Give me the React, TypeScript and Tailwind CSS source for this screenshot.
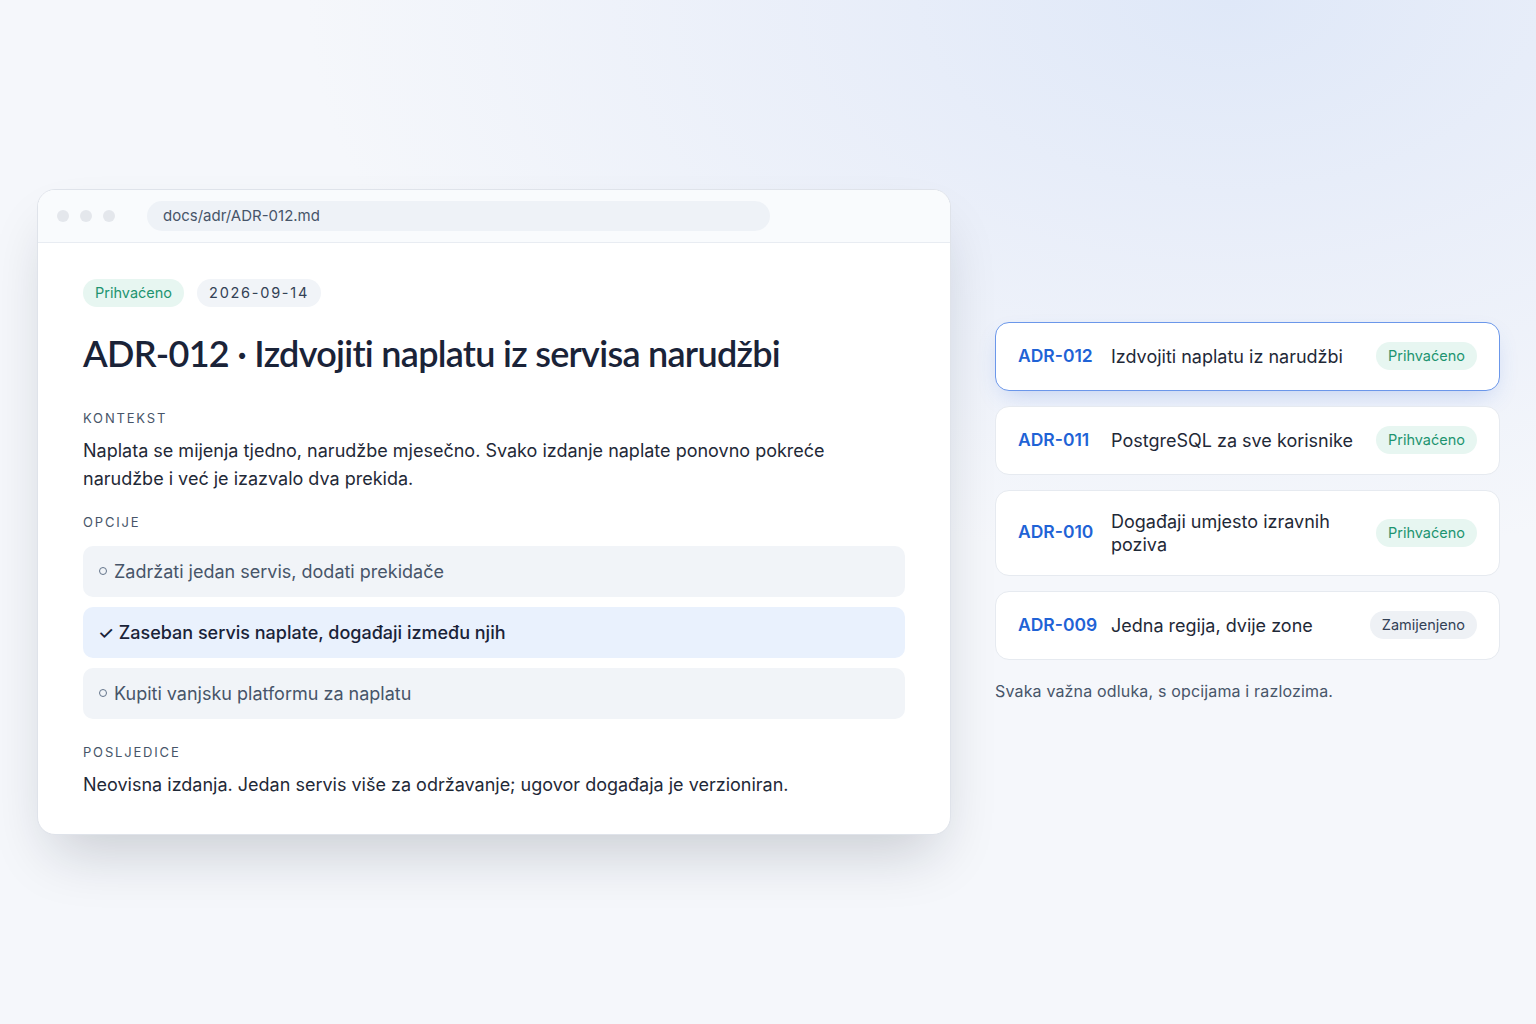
import React from "react";

const adrs = [
  { id: "ADR-012", title: "Izdvojiti naplatu iz narudžbi", status: "Prihvaćeno", active: true },
  { id: "ADR-011", title: "PostgreSQL za sve korisnike", status: "Prihvaćeno" },
  { id: "ADR-010", title: "Događaji umjesto izravnih poziva", status: "Prihvaćeno" },
  { id: "ADR-009", title: "Jedna regija, dvije zone", status: "Zamijenjeno" },
];

function Circle() {
  return <span className="mr-[7px] inline-block h-[8px] w-[8px] shrink-0 rounded-full border-[1.3px] border-[#64748b]" />;
}

export default function App() {
  return (
    <div
      className="relative h-screen w-full overflow-hidden bg-[#f5f7fb] text-[#1f2937]"
      style={{ fontFamily: "Inter, 'Noto Sans', sans-serif" }}
    >
      <div className="pointer-events-none absolute inset-0 bg-[radial-gradient(ellipse_60%_55%_at_80%_0%,#dfe8f8_0%,rgba(226,233,248,0.6)_45%,rgba(245,247,251,0)_100%)]" />
      <div className="relative flex h-full items-center gap-[44px] pl-[37px] pr-[36px]">
        {/* Window */}
        <div className="w-[914px] shrink-0 overflow-hidden rounded-[18px] border border-[#dfe3ea] bg-white shadow-[0_30px_60px_-15px_rgba(15,23,42,0.2)]">
          <div className="flex h-[53px] items-center gap-[32px] border-b border-[#e8ecf2] bg-[#f9fbfd] pl-[19px] pr-[180px]">
            <div className="flex gap-[11px]">
              <span className="h-[12px] w-[12px] rounded-full bg-[#e4e7ec]" />
              <span className="h-[12px] w-[12px] rounded-full bg-[#e4e7ec]" />
              <span className="h-[12px] w-[12px] rounded-full bg-[#e4e7ec]" />
            </div>
            <div className="flex h-[30px] flex-1 items-center rounded-full bg-[#eef2f7] px-[16px] text-[15px] text-[#475569]">
              docs/adr/ADR-012.md
            </div>
          </div>
          <div className="px-[45px] pt-[36px] pb-[35px]">
            <div className="flex gap-[13px]">
              <span className="flex h-[28px] items-center rounded-full bg-[#e7f6f1] px-[12px] text-[14.5px] text-[#1d9470]">
                Prihvaćeno
              </span>
              <span className="flex h-[28px] items-center rounded-full bg-[#f1f4f8] px-[12px] text-[14.5px] tracking-[0.12em] text-[#334155]">
                2026-09-14
              </span>
            </div>
            <h1
              className="mt-[24px] text-[36px] leading-[44px] tracking-[-0.02em] text-[#1a2338]"
              style={{ fontFamily: "Lato, Inter, sans-serif", fontWeight: 600 }}
            >
              ADR-012 · Izdvojiti naplatu iz servisa narudžbi
            </h1>
            <div className="mt-[34px] text-[13px] tracking-[0.14em] text-[#475569]">KONTEKST</div>
            <p className="mt-[9px] text-[18px] leading-[28px] text-[#1f2937]">
              Naplata se mijenja tjedno, narudžbe mjesečno. Svako izdanje naplate ponovno pokreće
              <br />
              narudžbe i već je izazvalo dva prekida.
            </p>
            <div className="mt-[20px] text-[13px] tracking-[0.14em] text-[#475569]">OPCIJE</div>
            <div className="mt-[13px] flex flex-col gap-[10px]">
              <div className="flex h-[51px] items-center rounded-[10px] bg-[#f1f4f8] px-[16px] text-[18px] text-[#475569]">
                <Circle />
                Zadržati jedan servis, dodati prekidače
              </div>
              <div className="flex h-[51px] items-center rounded-[10px] bg-[#e9f1fd] px-[15px] text-[18px] font-medium text-[#1a2338]">
                ✓ Zaseban servis naplate, događaji između njih
              </div>
              <div className="flex h-[51px] items-center rounded-[10px] bg-[#f1f4f8] px-[16px] text-[18px] text-[#475569]">
                <Circle />
                Kupiti vanjsku platformu za naplatu
              </div>
            </div>
            <div className="mt-[24px] text-[13px] tracking-[0.14em] text-[#475569]">POSLJEDICE</div>
            <p className="mt-[9px] text-[18px] leading-[28px] text-[#1f2937]">
              Neovisna izdanja. Jedan servis više za održavanje; ugovor događaja je verzioniran.
            </p>
          </div>
        </div>

        {/* Right list */}
        <div className="flex flex-1 flex-col">
          <div className="flex flex-col gap-[15px]">
            {adrs.map((a) => (
              <div
                key={a.id}
                className={
                  a.active
                    ? "flex min-h-[69px] items-center rounded-[14px] border border-[#6b97ea] bg-white px-[22px] py-[19px] shadow-[0_10px_24px_-8px_rgba(59,110,220,0.28)]"
                    : "flex min-h-[69px] items-center rounded-[14px] border border-[#e6eaf0] bg-white px-[22px] py-[19px]"
                }
              >
                <span className="w-[93px] shrink-0 text-[17.5px] font-semibold text-[#1f63d6]">{a.id}</span>
                <span className="flex-1 pr-[14px] text-[18px] leading-[23px] text-[#1f2937]">{a.title}</span>
                <span
                  className={
                    a.status === "Zamijenjeno"
                      ? "flex h-[28px] shrink-0 items-center rounded-full bg-[#eef1f5] px-[12px] text-[14.5px] text-[#334155]"
                      : "flex h-[28px] shrink-0 items-center rounded-full bg-[#e7f6f1] px-[12px] text-[14.5px] text-[#1d9470]"
                  }
                >
                  {a.status}
                </span>
              </div>
            ))}
          </div>
          <p className="mt-[19px] text-[16px] tracking-[0.01em] text-[#475569]">Svaka važna odluka, s opcijama i razlozima.</p>
        </div>
      </div>
    </div>
  );
}
